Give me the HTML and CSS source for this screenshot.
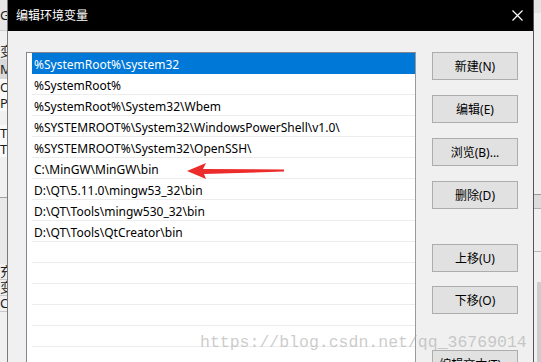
FILE: index.html
```html
<!DOCTYPE html>
<html lang="zh-CN">
<head>
    <meta charset="UTF-8">
    <meta name="viewport" content="width=device-width, initial-scale=1.0">
    <title>编辑环境变量</title>
    <link rel="stylesheet" href="styles.css">
</head>
<body>

<div class="screen">
    <div class="side side-left">
        <div class="peek peek-top">Gi</div>
        <div class="peek">变</div>
        <div class="peek peek-dark">M</div>
        <div class="peek peek-white">O</div>
        <div class="peek peek-white">Pa</div>
        <div class="peek peek-white peek-gap">TE</div>
        <div class="peek peek-white">TM</div>
        <div class="peek peek-fill"></div>
        <div class="peek peek-low">充</div>
        <div class="peek peek-low">变</div>
        <div class="peek peek-low">Co</div>
    </div>

    <div class="dialog">
        <div class="titlebar">
            <span class="title">编辑环境变量</span>
            <svg class="close" width="11" height="11" viewBox="0 0 11 11">
                <path d="M0.5 0.5 L10.5 10.5 M10.5 0.5 L0.5 10.5" stroke="#fff" stroke-width="1.2" fill="none"/>
            </svg>
        </div>

        <div class="body">
            <div class="list">
                <div class="row selected">%SystemRoot%\system32</div>
                <div class="row">%SystemRoot%</div>
                <div class="row">%SystemRoot%\System32\Wbem</div>
                <div class="row">%SYSTEMROOT%\System32\WindowsPowerShell\v1.0\</div>
                <div class="row">%SYSTEMROOT%\System32\OpenSSH\</div>
                <div class="row">C:\MinGW\MinGW\bin</div>
                <div class="row">D:\QT\5.11.0\mingw53_32\bin</div>
                <div class="row">D:\QT\Tools\mingw530_32\bin</div>
                <div class="row">D:\QT\Tools\QtCreator\bin</div>
                <div class="row"></div>
                <div class="row"></div>
                <div class="row"></div>
                <div class="row"></div>
                <div class="row"></div>
                <div class="row"></div>
            </div>

            <div class="actions">
                <button class="btn">新建(N)</button>
                <button class="btn">编辑(E)</button>
                <button class="btn">浏览(B)...</button>
                <button class="btn">删除(D)</button>
                <button class="btn btn-up">上移(U)</button>
                <button class="btn btn-down">下移(O)</button>
                <button class="btn btn-text">编辑文本(T)...</button>
            </div>

            <!-- annotation drawn on top of the screenshot -->
            <svg class="arrow" width="100" height="18" viewBox="0 0 100 18">
                <polygon points="0,9 19,1 16,7 97,7.5 97,9.5 17,12 19,17" fill="#ec2b2b"/>
            </svg>
            <div class="watermark">https://blog.csdn.net/qq_36769014</div>
        </div>
    </div>

    <div class="side side-right">
        <div class="strip strip-top"></div>
        <div class="strip strip-mid"></div>
        <div class="strip strip-band"></div>
        <div class="strip strip-line"></div>
        <div class="strip strip-bar"></div>
    </div>
</div>

</body>
</html>
```

FILE: styles.css
```css
:root {
    --dialog-bg: #f0f0f0;
    --select-color: #0078d7;
    --button-bg: #e1e1e1;
    --button-border: #adadad;
    --font-family: "Noto Sans", "Noto Sans CJK SC", sans-serif;
}
body {
    margin: 0;
    padding: 0;
    font-family: var(--font-family);
    font-size: 12px;
    color: #000;
    background-color: var(--dialog-bg);
}
.screen {
    display: flex;
    width: 541px;
    height: 362px;
    overflow: hidden;
}

/* windows behind the dialog */
.side {
    width: 7px;
    flex-shrink: 0;
    overflow: hidden;
    display: flex;
    flex-direction: column;
}
.side-left {
    background-color: #f0f0f0;
}
.peek {
    height: 16px;
    line-height: 16px;
    font-size: 13px;
    white-space: nowrap;
    overflow: hidden;
    flex-shrink: 0;
    color: #1a1a1a;
}
.peek-top {
    height: 30px;
    line-height: 30px;
    background-color: #e6e6e6;
    border-bottom: 1px solid #cfcfcf;
    margin-bottom: 12px;
}
.peek-dark {
    height: 20px;
    line-height: 20px;
    background-color: #d9d9d9;
}
.peek-white {
    background-color: #fafafa;
}
.peek-gap {
    margin-top: 14px;
}
.peek-fill {
    height: 66px;
    margin-top: 40px;
    border-top: 1px solid #a0a0a0;
    background-color: #e9e9e9;
}
.peek-low {
    height: 15px;
    line-height: 15px;
    border-bottom: 1px solid #c8c8c8;
}

.side-right {
    background-color: #f0f0f0;
}
.strip-top {
    height: 14px;
    background-color: #e4e4e4;
}
.strip-mid {
    height: 198px;
    border-bottom: 1px solid #9a9a9a;
}
.strip-band {
    height: 15px;
    background-color: #dcdcdc;
    border-bottom: 1px solid #b0b0b0;
}
.strip-line {
    height: 45px;
    border-bottom: 1px solid #b8b8b8;
}
.strip-bar {
    height: 88px;
    margin-top: 30px;
    margin-left: 3px;
    background-color: #cdcdcd;
}

/* dialog */
.dialog {
    width: 525px;
    flex-shrink: 0;
    display: flex;
    flex-direction: column;
    border-left: 1px solid #7a7a7a;
    border-right: 1px solid #555;
    background-color: var(--dialog-bg);
}
.titlebar {
    height: 31px;
    flex-shrink: 0;
    background-color: #000;
    color: #fff;
    display: flex;
    align-items: center;
    justify-content: space-between;
    padding: 0 10px 0 8px;
}
.title {
    font-size: 12px;
    margin-top: -1px;
}
.close {
    margin-top: -1px;
}

.body {
    position: relative;
    flex: 1;
    display: flex;
    align-items: flex-start;
    gap: 16px;
    padding: 21px 14px 0 18px;
}
.list {
    width: 390px;
    height: 400px;
    flex-shrink: 0;
    background-color: #fff;
    border: 1px solid #828790;
    border-right-color: #9a9a9a;
    padding: 0 0 0 5px;
    box-sizing: border-box;
}
.row {
    height: 20px;
    line-height: 23px;
    padding-left: 2px;
    border-bottom: 1px solid #ececec;
    white-space: nowrap;
    overflow: hidden;
}
.row.selected {
    background-color: var(--select-color);
    color: #fff;
    border-bottom-color: var(--select-color);
}

.actions {
    width: 86px;
    display: flex;
    flex-direction: column;
}
.btn {
    height: 28px;
    margin: 0 0 15px 0;
    padding: 0;
    font-family: var(--font-family);
    font-size: 12px;
    color: #000;
    background-color: var(--button-bg);
    border: 1px solid var(--button-border);
}
.btn-up {
    margin-top: 20px;
    margin-bottom: 14px;
}
.btn-down {
    margin-bottom: 36px;
}

.arrow {
    position: absolute;
    left: 179px;
    top: 131px;
}
.watermark {
    position: absolute;
    left: 192px;
    top: 302px;
    font-family: "Liberation Mono", monospace;
    font-size: 16.5px;
    color: rgba(170, 170, 170, 0.6);
    white-space: nowrap;
}
```
